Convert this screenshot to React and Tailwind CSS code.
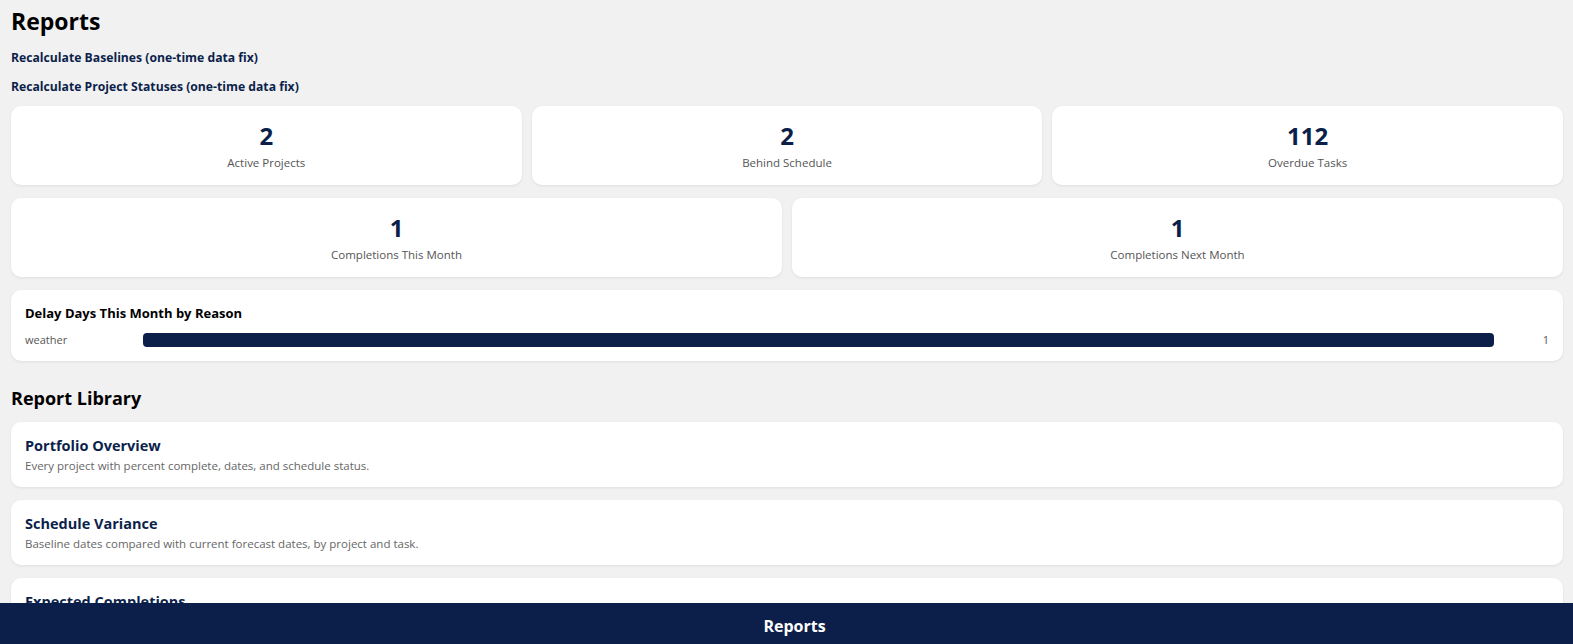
const stats = [
  { value: 2, label: 'Active Projects' },
  { value: 2, label: 'Behind Schedule' },
  { value: 112, label: 'Overdue Tasks' },
];

const completions = [
  { value: 1, label: 'Completions This Month' },
  { value: 1, label: 'Completions Next Month' },
];

const delays = [{ reason: 'weather', days: 1 }];

const library = [
  { title: 'Portfolio Overview', desc: 'Every project with percent complete, dates, and schedule status.' },
  { title: 'Schedule Variance', desc: 'Baseline dates compared with current forecast dates, by project and task.' },
  { title: 'Expected Completions', desc: 'Projects forecast to finish in the selected window.' },
];

function StatCard({ value, label }) {
  return (
    <div className="bg-white rounded-[10px] shadow-[0_1px_3px_rgba(0,0,0,0.08)] h-[79px] flex flex-col items-center justify-center">
      <div className="text-[24px] font-bold leading-[30px] text-[#0c1f4b]">{value}</div>
      <div className="text-[11.5px] leading-[16px] text-[#555] mt-[4px]">{label}</div>
    </div>
  );
}

export default function App() {
  const maxDays = Math.max(...delays.map(d => d.days));

  return (
    <div className="min-h-screen bg-[#f1f1f1] font-['Open_Sans',sans-serif] text-black">
      <div className="pl-[11px] pr-[10px] pt-[5px] pb-[60px]">
        <h1 className="text-[23px] font-bold leading-[32px]">Reports</h1>
        <div className="mt-[12px] flex flex-col items-start gap-[12px]">
          <button className="text-[12.2px] font-bold leading-[17px] text-[#0c1f4b]">Recalculate Baselines (one-time data fix)</button>
          <button className="text-[12.2px] font-bold leading-[17px] text-[#0c1f4b]">Recalculate Project Statuses (one-time data fix)</button>
        </div>

        <div className="mt-[11px] grid grid-cols-3 gap-[10px]">
          {stats.map(s => <StatCard key={s.label} {...s} />)}
        </div>
        <div className="mt-[13px] grid grid-cols-2 gap-[10px]">
          {completions.map(s => <StatCard key={s.label} {...s} />)}
        </div>

        <div className="mt-[13px] bg-white rounded-[10px] shadow-[0_1px_3px_rgba(0,0,0,0.08)] px-[14px] pt-[14px] pb-[12px]">
          <h3 className="text-[13px] font-bold leading-[18px]">Delay Days This Month by Reason</h3>
          {delays.map(d => (
            <div key={d.reason} className="mt-[10px] flex items-center">
              <div className="w-[118px] text-[11px] text-[#555]">{d.reason}</div>
              <div className="flex-1 h-[14px]">
                <div className="h-full rounded-[4px] bg-[#0c1f4b]" style={{ width: `${(d.days / maxDays) * 100}%` }} />
              </div>
              <div className="w-[55px] text-right text-[11px] text-[#555]">{d.days}</div>
            </div>
          ))}
        </div>

        <h2 className="mt-[25px] text-[18px] font-bold leading-[24px]">Report Library</h2>
        <div className="mt-[12px] flex flex-col gap-[13px]">
          {library.map(r => (
            <div key={r.title} className="bg-white rounded-[10px] shadow-[0_1px_3px_rgba(0,0,0,0.08)] px-[14px] pt-[14px] pb-[13px]">
              <div className="text-[14.5px] font-bold leading-[20px] text-[#0c1f4b]">{r.title}</div>
              <div className="text-[11.5px] leading-[16px] text-[#666] mt-[2px]">{r.desc}</div>
            </div>
          ))}
        </div>
      </div>

      <nav className="fixed bottom-0 left-0 right-0 h-[41px] bg-[#0c1f4b] flex items-center justify-center pl-[16px] pt-[4px]">
        <span className="text-white text-[16px] font-bold">Reports</span>
      </nav>
    </div>
  );
}
